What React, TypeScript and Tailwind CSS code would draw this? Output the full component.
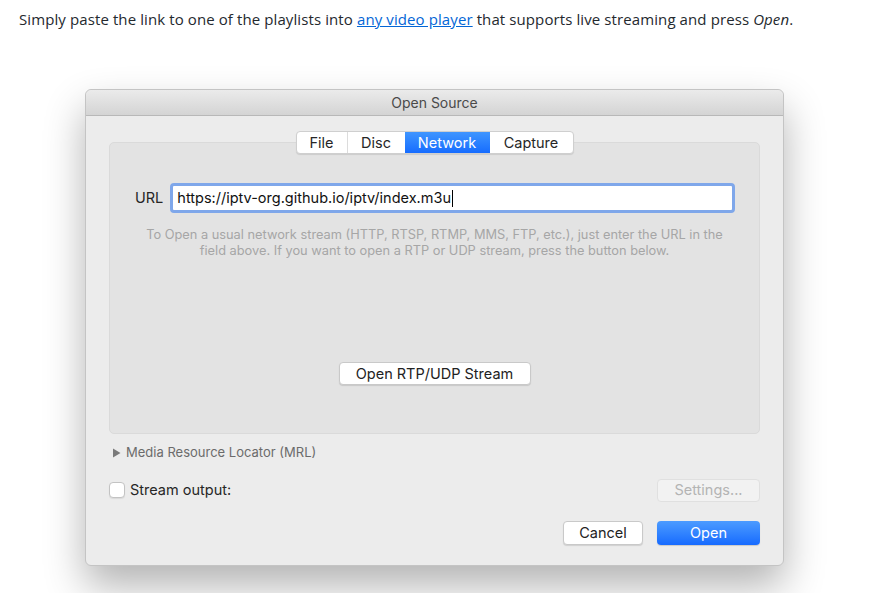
import React from "react";

const sf = { fontFamily: "Inter, Roboto, 'Noto Sans', sans-serif" };

const tabs = ["File", "Disc", "Network", "Capture"];

export default function App() {
  return (
    <div className="min-h-[593px] w-[872px] bg-white">
      <p
        className="pl-[19px] pt-[8px] text-[15px] leading-[22px] text-[#24292e]"
        style={{ fontFamily: "'Open Sans', 'Noto Sans', sans-serif", letterSpacing: "0.1px" }}
      >
        Simply paste the link to one of the playlists into{" "}
        <a className="text-[#0366d6] underline">any video player</a> that supports live
        streaming and press <em>Open</em>.
      </p>

      <div
        className="ml-[85px] mt-[59px] w-[699px] rounded-[6px] border border-[#c4c4c4] bg-[#ececec] shadow-[0_20px_40px_rgba(0,0,0,0.3)]"
        style={sf}
      >
        {/* title bar */}
        <div className="flex h-[26px] items-center justify-center rounded-t-[6px] border-b border-[#b8b8b8] bg-gradient-to-b from-[#ebebeb] to-[#d4d4d4] text-[14px] text-[#4a4a4a]">
          Open Source
        </div>

        <div className="px-[23px] pt-[15px] pb-[20px]">
          {/* tabs */}
          <div className="relative z-10 flex justify-center">
            <div className="flex h-[23px] overflow-hidden rounded-[4px] border border-[#cfcfcf] bg-white text-[14.5px] text-[#262626] shadow-[0_1px_1px_rgba(0,0,0,0.1)]">
              {tabs.map((t, i) => (
                <div
                  key={t}
                  className={`flex items-center justify-center ${
                    t === "Network"
                      ? "bg-gradient-to-b from-[#3f95ff] to-[#166cff] text-white"
                      : ""
                  } ${i === 0 ? "w-[51px] border-r border-[#dcdcdc]" : ""} ${
                    i === 1 ? "w-[57px]" : ""
                  } ${i === 2 ? "w-[85px]" : ""} ${i === 3 ? "w-[83px]" : ""}`}
                >
                  {t}
                </div>
              ))}
            </div>
          </div>

          {/* panel */}
          <div className="-mt-[12px] h-[292px] rounded-[5px] border border-[#dadada] bg-[#e3e3e3] pt-[40px]">
            <div className="flex items-center pl-[25px] pr-[24px]">
              <span className="mr-[7px] text-[14.5px] text-[#262626]">URL</span>
              <div className="flex h-[30px] flex-1 items-center rounded-[4px] border-[3px] border-[#7fa7ea] bg-white pl-[4px] text-[14.5px] text-[#111]">
                https://iptv-org.github.io/iptv/index.m3u
                <span className="ml-[1px] h-[17px] w-[1px] bg-black" />
              </div>
            </div>
            <p className="mx-auto mt-[14px] w-[590px] text-center text-[12.8px] leading-[16px] text-[#a6a6a6]">
              To Open a usual network stream (HTTP, RTSP, RTMP, MMS, FTP, etc.), just enter the URL in
              the field above. If you want to open a RTP or UDP stream, press the button below.
            </p>
            <div className="mt-[103px] flex justify-center">
              <div className="flex h-[23px] w-[192px] items-center justify-center rounded-[4px] border border-[#c9c9c9] bg-white text-[14.5px] text-[#222] shadow-[0_1px_1px_rgba(0,0,0,0.12)]">
                Open RTP/UDP Stream
              </div>
            </div>
          </div>

          {/* MRL */}
          <div className="mt-[9px] flex items-center pl-[3px] text-[13px] text-[#6b6b6b]">
            <svg width="9" height="10" viewBox="0 0 9 10" className="mr-[5px]">
              <path d="M1 0.5 L8.5 5 L1 9.5 Z" fill="#7a7a7a" />
            </svg>
            Media Resource Locator (MRL)
          </div>

          {/* stream output */}
          <div className="mt-[16px] flex items-center justify-between">
            <div className="flex items-center">
              <div className="h-[16px] w-[16px] rounded-[4px] border border-[#c3c3c3] bg-white shadow-[0_1px_1px_rgba(0,0,0,0.08)]" />
              <span className="ml-[5px] text-[14.5px] text-[#262626]">Stream output:</span>
            </div>
            <div className="flex h-[23px] w-[103px] items-center justify-center rounded-[4px] border border-[#e0e0e0] bg-[#f2f2f2] text-[14.5px] text-[#b4b4b4]">
              Settings...
            </div>
          </div>

          {/* buttons */}
          <div className="mt-[19px] flex justify-end gap-[14px]">
            <div className="flex h-[24px] w-[80px] items-center justify-center rounded-[4px] border border-[#c9c9c9] bg-white text-[14.5px] text-[#222] shadow-[0_1px_1px_rgba(0,0,0,0.12)]">
              Cancel
            </div>
            <div className="flex h-[24px] w-[103px] items-center justify-center rounded-[4px] bg-gradient-to-b from-[#4c9bff] to-[#166aff] text-[14.5px] text-white shadow-[0_1px_1px_rgba(0,0,0,0.15)]">
              Open
            </div>
          </div>
        </div>
      </div>
    </div>
  );
}
